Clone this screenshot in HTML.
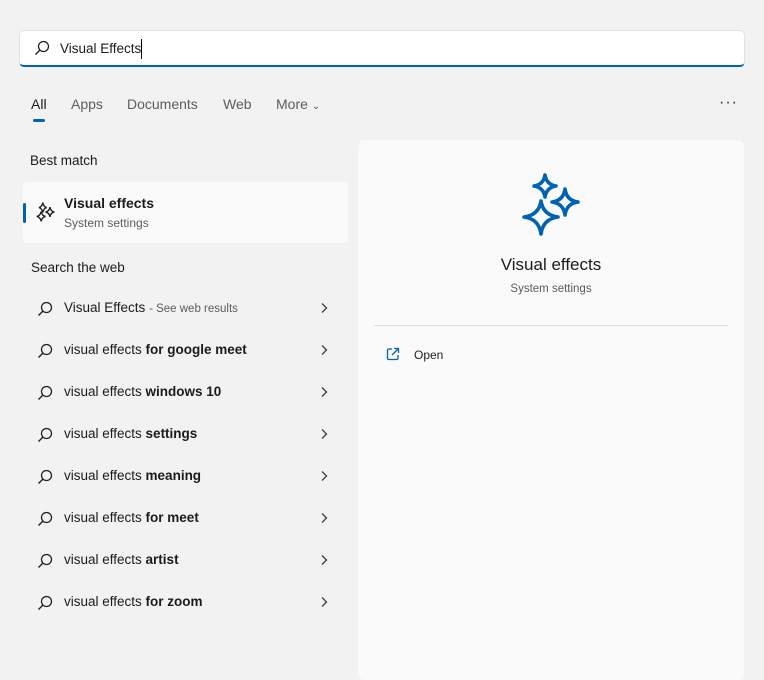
<!DOCTYPE html>
<html><head><style>
body{margin:0;width:764px;height:662px;background:#f2f2f2;font-family:"Liberation Sans",sans-serif;position:relative;overflow:hidden;color:#1b1b1b}
.abs{position:absolute}
.search{left:19px;top:30px;width:726px;height:37px;background:#fff;border-radius:5px;border:1px solid #e2e2e2;border-bottom:2px solid #0063b1;box-sizing:border-box}
.tab{top:96px;font-size:14px;color:#5c5c5c}
.row{left:24px;width:318px;height:42px}
.row .t{position:absolute;left:40px;top:13px;font-size:13.5px;color:#1b1b1b}
.row b{font-weight:bold}
.row svg.g{position:absolute;left:13px;top:14px}
.row svg.c{position:absolute;left:295px;top:15px}
</style></head><body>
<div class="abs search"></div>
<svg class="abs" style="left:34px;top:40px" width="16" height="16" viewBox="0 0 16 16"><circle cx="9.5" cy="6.5" r="5" fill="none" stroke="#222" stroke-width="1.3"/><line x1="6" y1="10" x2="1.5" y2="14.5" stroke="#222" stroke-width="1.4"/></svg>
<div class="abs" style="left:60px;top:41px;font-size:13.5px">Visual Effects</div>
<div class="abs" style="left:141px;top:39px;width:1px;height:20px;background:#000"></div>
<div class="abs tab" style="left:31px;color:#1b1b1b">All</div>
<div class="abs" style="left:33px;top:119px;width:12px;height:3px;border-radius:2px;background:#0063b1"></div>
<div class="abs tab" style="left:71px">Apps</div>
<div class="abs tab" style="left:127px">Documents</div>
<div class="abs tab" style="left:223px">Web</div>
<div class="abs tab" style="left:276px">More <span style="font-size:10px">&#8964;</span></div>
<div class="abs" style="left:719px;top:94px;font-size:16px;letter-spacing:1px;color:#333">···</div>
<div class="abs" style="left:30px;top:153px;font-size:13.5px;color:#1b1b1b">Best match</div>
<div class="abs" style="left:23px;top:182px;width:325px;height:61px;background:#fafafa;border-radius:4px"></div>
<div class="abs" style="left:23px;top:203px;width:3px;height:20px;background:#0063b1;border-radius:2px"></div>
<svg class="abs" style="left:34px;top:201px" width="22" height="22" viewBox="0 0 20 20" fill="none" stroke="#222" stroke-width="1.3"><path d="M8 1.5Q8.7 5.3 11.5 6Q8.7 6.7 8 10.5Q7.3 6.7 4.5 6Q7.3 5.3 8 1.5Z"/><path d="M14.5 5.5Q15.1 9.4 18.5 10Q15.1 10.6 14.5 14.5Q13.9 10.6 10.5 10Q13.9 9.4 14.5 5.5Z"/><path d="M6.5 9.5Q7.2 13.3 10.5 14Q7.2 14.7 6.5 18.5Q5.8 14.7 2.5 14Q5.8 13.3 6.5 9.5Z"/></svg>
<div class="abs" style="left:64px;top:195px;font-size:14px;font-weight:bold;color:#1b1b1b">Visual effects</div>
<div class="abs" style="left:64px;top:216px;font-size:12px;color:#5c5c5c">System settings</div>
<div class="abs" style="left:31px;top:260px;font-size:13.5px;color:#1b1b1b">Search the web</div>

<div class="abs row" style="top:287px"><svg class="g" width="16" height="16" viewBox="0 0 16 16"><circle cx="9.5" cy="6.5" r="5" fill="none" stroke="#222" stroke-width="1.3"/><line x1="6" y1="10" x2="1.5" y2="14.5" stroke="#222" stroke-width="1.4"/></svg><div class="t">Visual Effects <span style="font-size:11.5px;color:#5c5c5c">- See web results</span></div><svg class="c" width="10" height="12" viewBox="0 0 10 12"><path d="M3 1.5L7.5 6L3 10.5" fill="none" stroke="#444" stroke-width="1.4"/></svg></div>
<div class="abs row" style="top:329px"><svg class="g" width="16" height="16" viewBox="0 0 16 16"><circle cx="9.5" cy="6.5" r="5" fill="none" stroke="#222" stroke-width="1.3"/><line x1="6" y1="10" x2="1.5" y2="14.5" stroke="#222" stroke-width="1.4"/></svg><div class="t">visual effects <b>for google meet</b></div><svg class="c" width="10" height="12" viewBox="0 0 10 12"><path d="M3 1.5L7.5 6L3 10.5" fill="none" stroke="#444" stroke-width="1.4"/></svg></div>
<div class="abs row" style="top:371px"><svg class="g" width="16" height="16" viewBox="0 0 16 16"><circle cx="9.5" cy="6.5" r="5" fill="none" stroke="#222" stroke-width="1.3"/><line x1="6" y1="10" x2="1.5" y2="14.5" stroke="#222" stroke-width="1.4"/></svg><div class="t">visual effects <b>windows 10</b></div><svg class="c" width="10" height="12" viewBox="0 0 10 12"><path d="M3 1.5L7.5 6L3 10.5" fill="none" stroke="#444" stroke-width="1.4"/></svg></div>
<div class="abs row" style="top:413px"><svg class="g" width="16" height="16" viewBox="0 0 16 16"><circle cx="9.5" cy="6.5" r="5" fill="none" stroke="#222" stroke-width="1.3"/><line x1="6" y1="10" x2="1.5" y2="14.5" stroke="#222" stroke-width="1.4"/></svg><div class="t">visual effects <b>settings</b></div><svg class="c" width="10" height="12" viewBox="0 0 10 12"><path d="M3 1.5L7.5 6L3 10.5" fill="none" stroke="#444" stroke-width="1.4"/></svg></div>
<div class="abs row" style="top:455px"><svg class="g" width="16" height="16" viewBox="0 0 16 16"><circle cx="9.5" cy="6.5" r="5" fill="none" stroke="#222" stroke-width="1.3"/><line x1="6" y1="10" x2="1.5" y2="14.5" stroke="#222" stroke-width="1.4"/></svg><div class="t">visual effects <b>meaning</b></div><svg class="c" width="10" height="12" viewBox="0 0 10 12"><path d="M3 1.5L7.5 6L3 10.5" fill="none" stroke="#444" stroke-width="1.4"/></svg></div>
<div class="abs row" style="top:497px"><svg class="g" width="16" height="16" viewBox="0 0 16 16"><circle cx="9.5" cy="6.5" r="5" fill="none" stroke="#222" stroke-width="1.3"/><line x1="6" y1="10" x2="1.5" y2="14.5" stroke="#222" stroke-width="1.4"/></svg><div class="t">visual effects <b>for meet</b></div><svg class="c" width="10" height="12" viewBox="0 0 10 12"><path d="M3 1.5L7.5 6L3 10.5" fill="none" stroke="#444" stroke-width="1.4"/></svg></div>
<div class="abs row" style="top:539px"><svg class="g" width="16" height="16" viewBox="0 0 16 16"><circle cx="9.5" cy="6.5" r="5" fill="none" stroke="#222" stroke-width="1.3"/><line x1="6" y1="10" x2="1.5" y2="14.5" stroke="#222" stroke-width="1.4"/></svg><div class="t">visual effects <b>artist</b></div><svg class="c" width="10" height="12" viewBox="0 0 10 12"><path d="M3 1.5L7.5 6L3 10.5" fill="none" stroke="#444" stroke-width="1.4"/></svg></div>
<div class="abs row" style="top:581px"><svg class="g" width="16" height="16" viewBox="0 0 16 16"><circle cx="9.5" cy="6.5" r="5" fill="none" stroke="#222" stroke-width="1.3"/><line x1="6" y1="10" x2="1.5" y2="14.5" stroke="#222" stroke-width="1.4"/></svg><div class="t">visual effects <b>for zoom</b></div><svg class="c" width="10" height="12" viewBox="0 0 10 12"><path d="M3 1.5L7.5 6L3 10.5" fill="none" stroke="#444" stroke-width="1.4"/></svg></div>

<div class="abs" style="left:358px;top:140px;width:386px;height:540px;background:#fafafa;border-radius:7px"></div>
<svg class="abs" style="left:518px;top:170px" width="66" height="70" viewBox="518 170 66 70" fill="none" stroke="#0063b1" stroke-width="3.6" stroke-linejoin="round"><path d="M545 175Q546.5 184.5 556 186Q546.5 187.5 545 197Q543.5 187.5 534 186Q543.5 184.5 545 175Z"/><path d="M565 189Q566.5 200.5 578 202Q566.5 203.5 565 215Q563.5 203.5 552 202Q563.5 200.5 565 189Z"/><path d="M541 201Q543 215 558 217Q543 219 541 234Q539 219 524 217Q539 215 541 201Z"/></svg>
<div class="abs" style="left:358px;width:386px;top:255px;text-align:center;font-size:17px;color:#1b1b1b">Visual effects</div>
<div class="abs" style="left:358px;width:386px;top:283px;text-align:center;font-size:11.5px;color:#5c5c5c">System settings</div>
<div class="abs" style="left:374px;top:325px;width:354px;height:1px;background:#e0e0e0"></div>
<svg class="abs" style="left:386px;top:347px" width="14" height="14" viewBox="0 0 14 14" fill="none" stroke="#0063b1" stroke-width="1.3"><path d="M6 2H3Q1.5 2 1.5 3.5V11Q1.5 12.5 3 12.5H10.5Q12 12.5 12 11V8"/><path d="M8 1.5H12.5V6M12.5 1.5L6 8"/></svg>
<div class="abs" style="left:414px;top:348px;font-size:12px;color:#1b1b1b">Open</div>
</body></html>
